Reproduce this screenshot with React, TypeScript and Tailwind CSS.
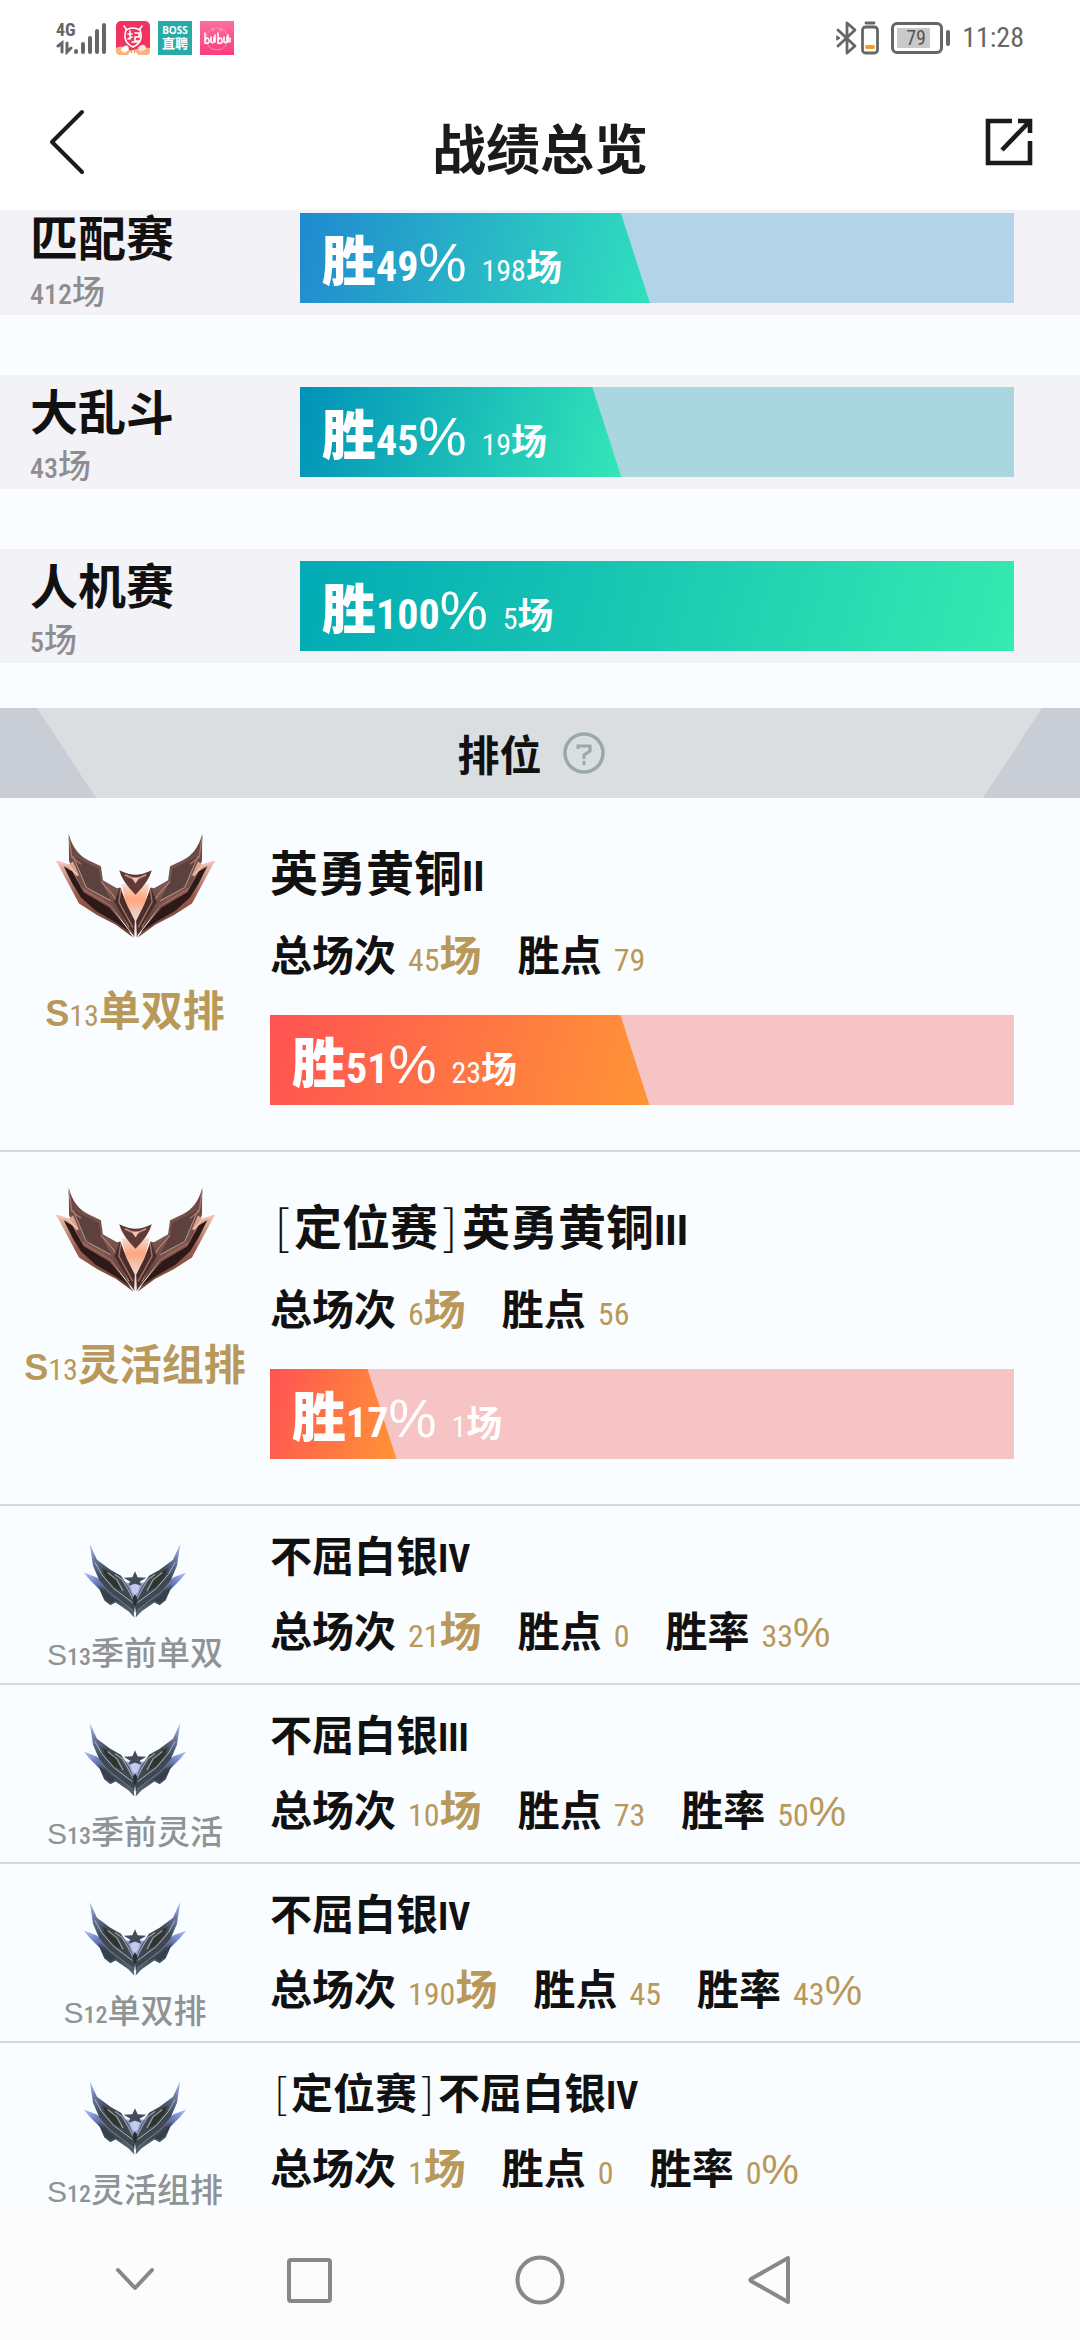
import React from 'react';
import clsx from 'clsx';

interface ModeRecord {
  name: string;
  total: number;
  rate: number;
  wins: number;
  fill: string;
  track: string;
}

interface RankRecord {
  season: string;
  queue: string;
  placement?: boolean;
  tier: string;
  division: string;
  total: number;
  points: number;
  rate: number;
  wins?: number;
}

const modes: ModeRecord[] = [
  { name: '匹配赛', total: 412, rate: 49, wins: 198, fill: 'from-[#2089d0] to-[#30e0bd]', track: 'bg-[#b3d3e8]' },
  { name: '大乱斗', total: 43, rate: 45, wins: 19, fill: 'from-[#0092b8] to-[#34e6b8]', track: 'bg-[#aad6e0]' },
  { name: '人机赛', total: 5, rate: 100, wins: 5, fill: 'from-[#02aab5] to-[#36eab0]', track: 'bg-[#aad6e0]' },
];

const currentRanks: RankRecord[] = [
  { season: '13', queue: '单双排', tier: '英勇黄铜', division: 'II', total: 45, points: 79, rate: 51, wins: 23 },
  { season: '13', queue: '灵活组排', placement: true, tier: '英勇黄铜', division: 'III', total: 6, points: 56, rate: 17, wins: 1 },
];

const pastRanks: RankRecord[] = [
  { season: '13', queue: '季前单双', tier: '不屈白银', division: 'IV', total: 21, points: 0, rate: 33 },
  { season: '13', queue: '季前灵活', tier: '不屈白银', division: 'III', total: 10, points: 73, rate: 50 },
  { season: '12', queue: '单双排', tier: '不屈白银', division: 'IV', total: 190, points: 45, rate: 43 },
  { season: '12', queue: '灵活组排', placement: true, tier: '不屈白银', division: 'IV', total: 1, points: 0, rate: 0 },
];

const Num: React.FC<{ className?: string; children: React.ReactNode }> = ({ className, children }) => (
  <span
    className={clsx(
      "leading-none font-['Liberation_Sans_Narrow','Roboto_Condensed','Open_Sans_Condensed','Noto_Sans_Condensed','Liberation_Sans',sans-serif]",
      className
    )}
  >
    {children}
  </span>
);

const StatusBar: React.FC = () => (
  <div className="flex items-center justify-between h-[76px] pl-[56px] pr-[56px] text-[#666]">
    <div className="flex items-center">
      <div className="relative w-[52px] h-[34px]">
        <Num className="absolute left-0 top-0 text-[18px] font-bold">4G</Num>
        <svg viewBox="0 0 52 34" className="w-full h-full" fill="none" stroke="currentColor" strokeWidth="4" strokeLinecap="round">
          <path d="M2 25l4-3v9M11 22v9l4-4" strokeWidth="3" />
          <path d="M20 30v1M27 23v8M34 17v14M41 10v21M48 4v27" />
        </svg>
      </div>
      <svg viewBox="0 0 34 34" className="ml-2 w-[34px] h-[34px]">
        <rect width="34" height="34" rx="5" fill="#f2335f" />
        <path d="M0 27q5-3 9 0t8 2 8-2 9 0v3q0 4-5 4H5q-5 0-5-4z" fill="#ffb27c" />
        <g fill="none" stroke="#fff" strokeWidth="1.6" strokeLinecap="round">
          <path d="M10 9q7-4 14 0 4 12-7 17-11-5-7-17zM8 5l2 3M26 5l-2 3M12 13h4M14 10v8M12 18l4-2M19 12h4v4h-4v4h4M16 21h5" />
        </g>
        <ellipse cx="9" cy="28" rx="4" ry="3" fill="#fff" transform="rotate(-30 9 28)" />
        <ellipse cx="26" cy="27" rx="4" ry="3" fill="#ffe2d6" transform="rotate(-20 26 27)" />
        <path d="M12 34q5-9 10 0z" fill="#fff" />
        <path d="M15 31h1M18 31h1" stroke="#9c2440" />
      </svg>
      <div className="ml-2 w-[34px] h-[34px] bg-[#27aba6] text-white text-center font-bold">
        <div className="pt-[4px] text-[10px] leading-[11px] font-['Open_Sans',sans-serif]">BOSS</div>
        <div className="text-[13px] leading-[14px]">直聘</div>
      </div>
      <svg viewBox="0 0 34 34" className="ml-2 w-[34px] h-[34px]">
        <defs>
          <linearGradient id="pink" x1="0" y1="0" x2="0" y2="1">
            <stop stopColor="#fb6fa0" />
            <stop offset="1" stopColor="#fc3c80" />
          </linearGradient>
        </defs>
        <rect width="34" height="34" fill="url(#pink)" />
        <circle cx="17" cy="18" r="11" fill="none" stroke="#fd8db2" strokeWidth="1" />
        <path d="M12 7l2 3M22 7l-2 3" stroke="#fd8db2" strokeWidth="2" />
        <path d="M5 12v10q5 1 4-3t-4 0M11 16v5q2 2 3-1v-4M15 14v7M18 12v10q5 1 4-3t-4 0M24 16v5q2 2 3-1v-4M28 14v7M30 17v4" fill="none" stroke="#fff" strokeWidth="1.6" strokeLinecap="round" />
      </svg>
    </div>
    <div className="flex items-center">
      <svg viewBox="0 0 44 34" className="w-[44px] h-[34px]" fill="none" stroke="currentColor" strokeWidth="2.8" strokeLinejoin="round" strokeLinecap="round">
        <path d="M2 9l17 16-8 7V2l8 7L2 25" />
        <path d="M1 15l3 2-3 2z" fill="currentColor" strokeWidth="1" />
        <rect x="26.500" y="6" width="15" height="26" rx="3" />
        <path d="M30 2h8" />
        <path d="M31 26h6" stroke="#f79a1e" strokeWidth="4" />
      </svg>
      <div className="ml-[11px] w-[52px] h-[32px] rounded-[6px] border-[3px] border-[#666] p-[3px]">
        <div className="w-[33px] h-full bg-[#c9c9c9]">
          <Num className="block pl-[9px] text-[20px] text-[#555]">79</Num>
        </div>
      </div>
      <div className="ml-[3px] w-[4px] h-[16px] rounded-sm bg-[#666]" />
      <Num className="ml-[12px] text-[28px]">11:28</Num>
    </div>
  </div>
);

const Header: React.FC = () => (
  <header className="relative z-10 bg-white">
    <StatusBar />
    <div className="flex items-center justify-between h-[134px] px-[46px] pb-[2px] text-[#1b1b1b]">
      <button type="button" aria-label="返回" className="w-[50px]">
        <svg viewBox="0 0 42 66" className="w-[42px] h-[66px]" fill="none" stroke="currentColor" strokeWidth="4" strokeLinecap="round" strokeLinejoin="round">
          <path d="M36 3L6 33l30 30" />
        </svg>
      </button>
      <h1 className="pt-[10px] text-[54px] leading-[60px] font-bold">战绩总览</h1>
      <button type="button" aria-label="分享">
        <svg viewBox="0 0 50 50" className="w-[50px] h-[50px]" fill="none" stroke="currentColor" strokeWidth="4.600">
          <path d="M28 4H4v42h42V24" />
          <path d="M34 4h12v12M46 4L18 33" />
        </svg>
      </button>
    </div>
  </header>
);

const WinBar: React.FC<{ rate: number; wins: number; fill: string; track: string }> = ({ rate, wins, fill, track }) => (
  <div className={clsx('relative h-[90px]', track)}>
    <div
      className={clsx(
        'absolute inset-y-0 left-0 bg-linear-[105deg]',
        fill,
        rate < 100 && '[clip-path:polygon(0_0,calc(100%_-_29px)_0,100%_100%,0_100%)]'
      )}
      style={{ width: `${rate}%` }}
    />
    <div className="relative flex items-baseline pl-[22px] text-white">
      <span className="text-[54px] leading-[90px] font-black">胜</span>
      <Num className="text-[42px] font-bold">{rate}</Num>
      <span className="text-[54px] leading-none font-['Liberation_Sans',sans-serif]">%</span>
      <Num className="ml-[15px] text-[30px]">{wins}</Num>
      <span className="text-[36px] leading-none font-bold">场</span>
    </div>
  </div>
);

const BronzeWing: React.FC = () => (
  <>
    {/* outer feather */}
    <path d="M166 184L214 196L240 262L330 318L398 413L345 374L288 345L234 310L206 258Z" fill="url(#bronzeRim)" />
    <path d="M188 198L214 214L248 276L325 322L388 396L340 364L284 332L240 292L214 250Z" fill="#2c1a19" />
    {/* upper feather */}
    <path d="M203 100Q218 158 262 180L300 198L306 240L348 264L358 262L376 310L402 412L330 318L240 262L204 182Z" fill="url(#bronzeBody)" />
    <path d="M216 168L294 206L300 244L330 300L256 262Z" fill="#5d413e" />
    <path d="M216 168L256 262L330 302" fill="none" stroke="#b9978c" strokeWidth="3" />
    <path d="M204 112L212 170L240 192" fill="none" stroke="#a97a70" strokeWidth="4" />
    <path d="M300 244L334 282L350 306L384 382" fill="none" stroke="#c79a8c" strokeWidth="3" />
    {/* inner blade */}
    <path d="M358 262L340 306L400 404L402 362L376 310Z" fill="#4a2d2a" />
    <path d="M360 266L354 306L396 382" fill="none" stroke="#a47568" strokeWidth="4" />
    <path d="M166 184L204 196L230 226" fill="none" stroke="#f0c3b2" strokeWidth="6" />
    <path d="M204 192L216 184L236 230Z" fill="#e2a48f" />
  </>
);

const BronzeEmblem: React.FC = () => (
  <svg viewBox="159 95 490 322" className="w-[163px] h-[107px]">
    <defs>
      <linearGradient id="bronzeRim" x1="0" y1="0" x2="1" y2="1">
        <stop stopColor="#f0c8b8" />
        <stop offset=".35" stopColor="#9b5a50" />
        <stop offset="1" stopColor="#6a3c36" />
      </linearGradient>
      <linearGradient id="bronzeBody" x1="0" y1="0" x2="1" y2="1">
        <stop stopColor="#6b4540" />
        <stop offset=".55" stopColor="#7d5951" />
        <stop offset="1" stopColor="#5a3833" />
      </linearGradient>
      <linearGradient id="bronzeGlow" x1="0" y1="0" x2="0" y2="1">
        <stop stopColor="#f3d9cf" />
        <stop offset=".3" stopColor="#ffa57c" />
        <stop offset=".6" stopColor="#ecd0c6" />
        <stop offset="1" stopColor="#f5eeec" />
      </linearGradient>
    </defs>
    <path d="M362 252L446 252L430 320L406 408L402 408L378 320Z" fill="url(#bronzeGlow)" />
    <BronzeWing />
    <g transform="matrix(-1 0 0 1 808 0)">
      <BronzeWing />
    </g>
    <path d="M355 210Q385 224 404 224T453 210Q444 244 404 284Q364 244 355 210Z" fill="#5f3a37" />
    <path d="M372 224L404 238L436 224" fill="none" stroke="#c29186" strokeWidth="5" />
    <path d="M392 232L404 250L416 232Z" fill="#ecc4b6" />
  </svg>
);

const SilverWing: React.FC = () => (
  <>
    {/* outer feather */}
    <path d="M250 216L288 230L340 270L400 330L402 351L384 332L346 306L330 314L312 300L298 268L268 238Z" fill="url(#silverLower)" />
    <path d="M292 256L332 288L392 324L346 300L330 308L314 294Z" fill="#35404d" />
    {/* upper feather */}
    <path d="M268 130L290 178L330 208L362 226L386 262L403 300L402 336L344 292L296 238L278 196Z" fill="url(#silverUpper)" />
    <path d="M306 204L344 228L372 276L340 258L318 232Z" fill="#2e342f" />
    <path d="M322 216L350 238L368 272" fill="none" stroke="#93a096" strokeWidth="4" />
    <path d="M284 186L304 222L340 264L396 306" fill="none" stroke="#aab6c2" strokeWidth="3" />
    <path d="M344 222L366 238L384 268L398 296" fill="none" stroke="#8f9bb0" strokeWidth="4" />
    <path d="M290 240L330 278L398 330" fill="none" stroke="#76838f" strokeWidth="3" />
  </>
);

const SilverEmblem: React.FC = () => (
  <svg viewBox="248 128 312 224" className="w-[104px] h-[75px]">
    <defs>
      <linearGradient id="silverUpper" x1="0" y1="0" x2=".7" y2="1">
        <stop stopColor="#b8c3ff" />
        <stop offset=".22" stopColor="#66739f" />
        <stop offset=".45" stopColor="#3f4850" />
        <stop offset="1" stopColor="#3f4851" />
      </linearGradient>
      <linearGradient id="silverLower" x1="0" y1="0" x2=".8" y2="1">
        <stop stopColor="#b5c2ff" />
        <stop offset=".28" stopColor="#6577b8" />
        <stop offset=".45" stopColor="#3d4755" />
        <stop offset="1" stopColor="#56626f" />
      </linearGradient>
    </defs>
    <path d="M374 246L434 246L404 330Z" fill="#9aa6d2" />
    <SilverWing />
    <g transform="matrix(-1 0 0 1 808 0)">
      <SilverWing />
    </g>
    <path d="M404 212L412 230L438 232L418 244L424 256L404 250L384 256L390 244L370 232L396 230Z" fill="#434c58" />
    <path d="M390 256L404 250L418 256L412 276L404 282L396 276Z" fill="#c2cbec" />
    <path d="M404 282L411 292L404 326L397 292Z" fill="#262d33" />
  </svg>
);

const ModeRow: React.FC<{ mode: ModeRecord }> = ({ mode }) => (
  <div className="flex py-3 pr-[66px] bg-[#f3f2f6]">
    <div className="w-[300px] shrink-0 h-[90px] pl-[30px]">
      <div className="text-[48px] leading-[44px] font-bold text-[#111]">{mode.name}</div>
      <div className="mt-[16px] text-[33px] leading-[34px] font-medium text-[#8e8e92]">
        <Num className="text-[28px]">{mode.total}</Num>场
      </div>
    </div>
    <div className="flex-1">
      <WinBar rate={mode.rate} wins={mode.wins} fill={mode.fill} track={mode.track} />
    </div>
  </div>
);

const Stat: React.FC<{ label: string; value: number; unit?: React.ReactNode }> = ({ label, value, unit }) => (
  <div className="flex items-baseline">
    <dt>{label}</dt>
    <dd className="pl-3 text-[#b8995a]">
      <Num className="text-[32px] font-normal">{value}</Num>
      {unit}
    </dd>
  </div>
);

const RankTitle: React.FC<{ rank: RankRecord; large?: boolean }> = ({ rank, large }) => (
  <h3 className={clsx('font-bold', large ? 'text-[48px] leading-[44px]' : 'text-[42px] leading-[38px]')}>
    {rank.placement && (
      <>
        <span className={clsx('inline-block text-center font-light', large ? 'w-[24px]' : 'w-[21px]')}>[</span>
        定位赛
        <span className={clsx('inline-block text-center font-light', large ? 'w-[24px]' : 'w-[21px]')}>]</span>
      </>
    )}
    {rank.tier}
    <Num className={large ? 'text-[42px]' : 'text-[38px]'}>{rank.division}</Num>
  </h3>
);

const CurrentRank: React.FC<{ rank: RankRecord }> = ({ rank }) => (
  <section className="flex pb-[45px] pr-[66px] border-b-2 border-[#d5d9dc]">
    <div className="w-[270px] shrink-0 flex flex-col items-center pt-[34px]">
      <BronzeEmblem />
      <div className="mt-[48px] text-[42px] leading-[42px] font-bold text-[#b8995a] whitespace-nowrap">
        <span className="text-[36px] leading-none font-['Liberation_Sans',sans-serif]">S</span>
        <Num className="text-[30px] font-normal">{rank.season}</Num>
        {rank.queue}
      </div>
    </div>
    <div className="flex-1 pt-[50px]">
      <RankTitle rank={rank} large />
      <dl className="flex gap-[36px] mt-[34px] text-[42px] leading-[42px] font-bold">
        <Stat label="总场次" value={rank.total} unit="场" />
        <Stat label="胜点" value={rank.points} />
      </dl>
      <div className="mt-[39px]">
        <WinBar rate={rank.rate} wins={rank.wins ?? 0} fill="from-[#ff5352] to-[#ff9436]" track="bg-[#f7c4c5]" />
      </div>
    </div>
  </section>
);

const PastRank: React.FC<{ rank: RankRecord }> = ({ rank }) => (
  <section className="flex pb-[15px] border-b-2 border-[#d5d9dc] last:border-0 last:pb-0">
    <div className="w-[270px] shrink-0 flex flex-col items-center pt-[37px]">
      <SilverEmblem />
      <div className="mt-4 h-[34px] text-[33px] leading-[34px] font-medium text-[#8f9394] whitespace-nowrap">
        <span className="text-[30px] leading-none font-['Liberation_Sans',sans-serif]">S</span>
        <Num className="text-[24px]">{rank.season}</Num>
        {rank.queue}
      </div>
    </div>
    <div className="flex-1 pt-[29px]">
      <RankTitle rank={rank} />
      <dl className="flex gap-[36px] mt-[30px] text-[42px] leading-[42px] font-bold">
        <Stat label="总场次" value={rank.total} unit="场" />
        <Stat label="胜点" value={rank.points} />
        <Stat
          label="胜率"
          value={rank.rate}
          unit={<span className="leading-none font-normal font-['Liberation_Sans',sans-serif]">%</span>}
        />
      </dl>
    </div>
  </section>
);

const RankBanner: React.FC = () => (
  <div className="bg-[#c8cdd6]">
    <div className="flex items-center justify-center gap-[21px] h-[90px] pr-[18px] bg-[#dadee1] [clip-path:polygon(37px_0,calc(100%_-_38px)_0,calc(100%_-_97px)_100%,96px_100%)]">
      <h2 className="text-[42px] leading-[42px] font-bold">排位</h2>
      <button type="button" aria-label="排位说明">
        <svg viewBox="0 0 42 42" className="w-[42px] h-[42px]" fill="none" stroke="#98a8ab" strokeWidth="3.500">
          <circle cx="21" cy="21" r="19" />
          <path d="M15 17v-3h12v5l-6 4v4M21 29v4" strokeWidth="3" />
        </svg>
      </button>
    </div>
  </div>
);

const NavBar: React.FC = () => (
  <nav className="grid grid-cols-[174fr_174fr_288fr_170fr] place-items-center h-[132px] pl-[48px] pr-[226px] pt-[12px] bg-[#fcfcfc] text-[#888]">
    <button type="button" aria-label="收起">
      <svg viewBox="0 0 44 44" className="w-[44px] h-[44px]" fill="none" stroke="currentColor" strokeWidth="4" strokeLinecap="round" strokeLinejoin="round">
        <path d="M5 12l17 18 17-18" />
      </svg>
    </button>
    <button type="button" aria-label="最近任务">
      <svg viewBox="0 0 50 50" className="w-[50px] h-[50px]" fill="none" stroke="currentColor" strokeWidth="4">
        <rect x="5" y="5" width="41" height="41" rx="2" />
      </svg>
    </button>
    <button type="button" aria-label="主屏幕">
      <svg viewBox="0 0 50 50" className="w-[50px] h-[50px]" fill="none" stroke="currentColor" strokeWidth="4">
        <circle cx="25" cy="25" r="22.500" />
      </svg>
    </button>
    <button type="button" aria-label="后退">
      <svg viewBox="0 0 50 50" className="w-[50px] h-[50px]" fill="none" stroke="currentColor" strokeWidth="4" strokeLinejoin="round">
        <path d="M44 3v44L7 26q-1-1 0-2z" />
      </svg>
    </button>
  </nav>
);

const App: React.FC = () => {
  return (
    <div className="flex flex-col min-h-screen bg-[#fafdff] text-[#111] font-['Noto_Sans_CJK_SC',sans-serif]">
      <Header />
      {/* The list is scrolled slightly under the header */}
      <main className="flex-1 -mt-[9px]">
        <div className="flex flex-col gap-[60px] pb-[45px]">
          {modes.map((mode) => (
            <ModeRow key={mode.name} mode={mode} />
          ))}
        </div>
        <RankBanner />
        {currentRanks.map((rank) => (
          <CurrentRank key={rank.queue} rank={rank} />
        ))}
        <div>
          {pastRanks.map((rank) => (
            <PastRank key={rank.season + rank.queue} rank={rank} />
          ))}
        </div>
      </main>
      <NavBar />
    </div>
  );
};

export default App;
